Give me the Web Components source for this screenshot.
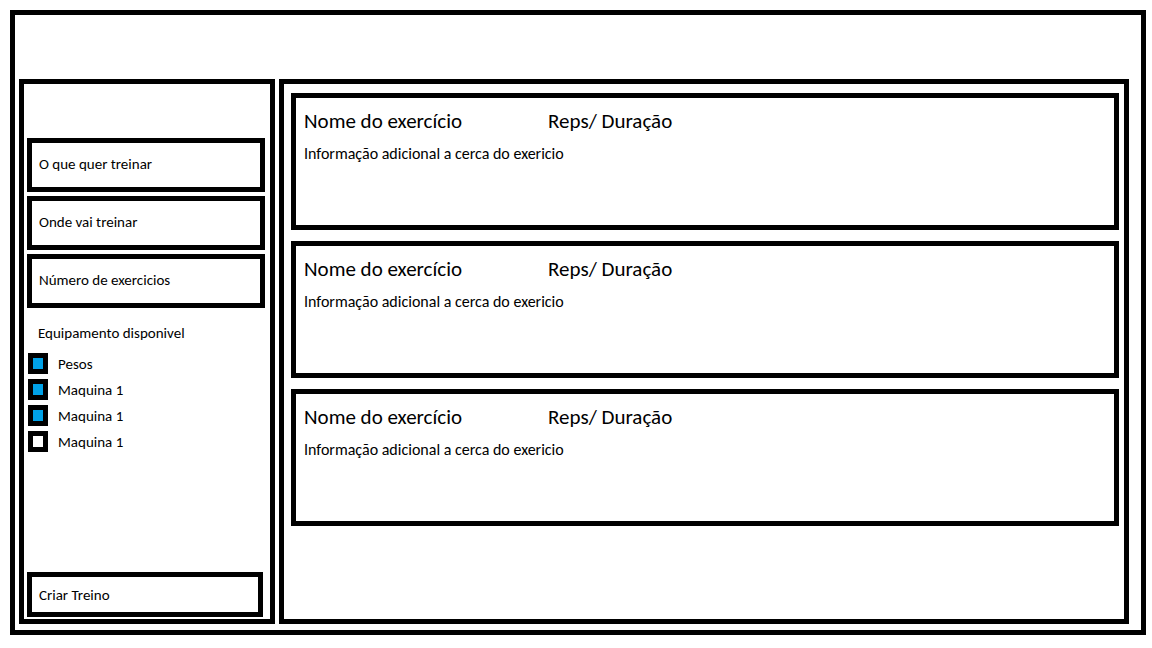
<!DOCTYPE html>
<html lang="pt">
<head>
<meta charset="utf-8">
<meta name="viewport" content="width=device-width, initial-scale=1">
<title>Criar Treino</title>
<style>
  body { margin: 0; background: #fff; color: #000; font-family: Carlito, Calibri, Lato, sans-serif; font-size: 15px; line-height: 20px; }
</style>
</head>
<body>
<workout-app>
  <workout-sidebar slot="sidebar">
    <choice-field label="O que quer treinar"></choice-field>
    <choice-field label="Onde vai treinar"></choice-field>
    <choice-field label="Número de exercicios"></choice-field>
    <check-item slot="equipment" checked>Pesos</check-item>
    <check-item slot="equipment" checked>Maquina 1</check-item>
    <check-item slot="equipment" checked>Maquina 1</check-item>
    <check-item slot="equipment">Maquina 1</check-item>
  </workout-sidebar>
  <exercise-card>
    <span slot="name">Nome do exercício</span>
    <span slot="reps">Reps/ Duração</span>
    Informação adicional a cerca do exericio
  </exercise-card>
  <exercise-card>
    <span slot="name">Nome do exercício</span>
    <span slot="reps">Reps/ Duração</span>
    Informação adicional a cerca do exericio
  </exercise-card>
  <exercise-card>
    <span slot="name">Nome do exercício</span>
    <span slot="reps">Reps/ Duração</span>
    Informação adicional a cerca do exericio
  </exercise-card>
</workout-app>

<script>
const define = (name, html, setup) => {
  const template = document.createElement('template');
  template.innerHTML = '<style>*, :host { box-sizing: border-box; }</style>' + html;
  customElements.define(name, class extends HTMLElement {
    constructor() {
      super();
      this.attachShadow({ mode: 'open' }).append(template.content.cloneNode(true));
    }
    connectedCallback() { if (setup) setup(this, this.shadowRoot); }
  });
};

define('workout-app', `
  <style>
    :host { display: flex; min-height: 100vh; padding: 10px 6px 13px 10px; }
    .frame { flex: 1; display: grid; grid-template-columns: 256px 1fr; gap: 4px; border: 5px solid; padding: 64px 12px 6px 4px; }
    main { display: flex; flex-direction: column; gap: 11px; border: 5px solid; padding: 9px 5px 9px 7px; }
  </style>
  <div class="frame">
    <slot name="sidebar"></slot>
    <main><slot></slot></main>
  </div>`);

define('workout-sidebar', `
  <style>
    :host { display: block; border: 5px solid; padding: 54px 5px 2px 3px; }
    form { display: flex; flex-direction: column; min-height: 100%; }
    .fields { display: flex; flex-direction: column; gap: 4px; }
    fieldset { border: 0; margin: 0; padding: 15px 0 24px 1px; min-width: 0; }
    legend { float: left; width: 100%; padding: 0 0 10px 10px; }
    .list { clear: both; display: flex; flex-direction: column; gap: 5px; }
    button { margin: auto 2px 0 0; height: 45px; border: 5px solid #000; border-radius: 0; background: #fff; color: inherit; font: inherit; text-align: left; padding: 0 7px; }
  </style>
  <form>
    <div class="fields"><slot></slot></div>
    <fieldset>
      <legend>Equipamento disponivel</legend>
      <div class="list"><slot name="equipment"></slot></div>
    </fieldset>
    <button type="button">Criar Treino</button>
  </form>`);

define('choice-field', `
  <style>
    :host { display: block; }
    select { display: block; width: 100%; height: 54px; appearance: none; border: 5px solid #000; border-radius: 0; background: #fff; color: inherit; font: inherit; padding: 0 7px 3px; }
  </style>
  <select><option></option></select>`,
  (host, root) => {
    const label = host.getAttribute('label');
    root.querySelector('select').setAttribute('aria-label', label);
    root.querySelector('option').textContent = label;
  });

define('check-item', `
  <style>
    :host { display: block; }
    label { display: flex; align-items: center; gap: 10px; height: 21px; }
    input { appearance: none; margin: 0; width: 20px; height: 21px; border: 5px solid #000; background: #fff; }
    input:checked { background: #00a2e8; }
  </style>
  <label><input type="checkbox"><span><slot></slot></span></label>`,
  (host, root) => { root.querySelector('input').checked = host.hasAttribute('checked'); });

define('exercise-card', `
  <style>
    :host { display: block; min-height: 137px; border: 5px solid; padding: 10px 8px; }
    header { display: grid; grid-template-columns: 244px 1fr; font-size: 21px; line-height: 26px; }
    h2 { margin: 0; font: inherit; }
    p { margin: 10px 0 0; font-size: 16px; line-height: 20px; }
  </style>
  <article>
    <header><h2><slot name="name"></slot></h2><div><slot name="reps"></slot></div></header>
    <p><slot></slot></p>
  </article>`);
</script>
</body>
</html>
